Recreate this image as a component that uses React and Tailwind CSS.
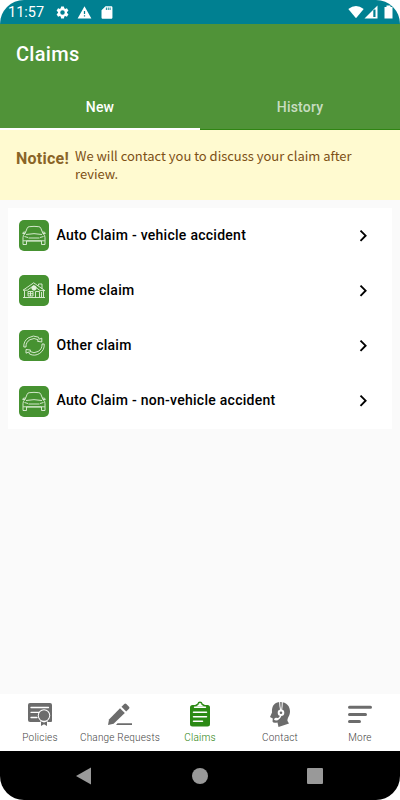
const claims = [
  { label: "Auto Claim - vehicle accident", Icon: CarIcon },
  { label: "Home claim", Icon: HouseIcon },
  { label: "Other claim", Icon: CycleIcon },
  { label: "Auto Claim - non-vehicle accident", Icon: CarIcon },
];

const navItems = [
  { label: "Policies", Icon: PoliciesIcon },
  { label: "Change Requests", Icon: PencilIcon },
  { label: "Claims", Icon: ClipboardIcon, active: true },
  { label: "Contact", Icon: HeadsetIcon },
  { label: "More", Icon: MoreIcon },
];

function CarIcon() {
  return (
    <svg viewBox="0 0 30 31" className="h-[31px] w-[30px]" fill="none" stroke="#e3f1dc" strokeWidth="0.9" strokeLinejoin="round">
      <path d="M6 13.5 8.2 8.2Q8.7 6.8 10.2 6.7Q15 6 19.8 6.7Q21.3 6.8 21.8 8.2L24 13.5" />
      <path d="M6 13.5H3.7Q3.6 11.8 6.3 12M24 13.5H26.3Q26.4 11.8 23.7 12" />
      <path d="M6 13.5Q4 15 4 17.5V24.5H7.5V21H22.5V24.5H26V17.5Q26 15 24 13.5" />
      <path d="M7 14.5Q15 12.8 23 14.5M4.2 20.8H25.8M9.5 18H20.5M5.5 16.5 9 17.5M24.5 16.5 21 17.5" />
    </svg>
  );
}

function HouseIcon() {
  return (
    <svg viewBox="0 0 30 31" className="h-[31px] w-[30px]" fill="none" stroke="#e3f1dc" strokeWidth="0.9">
      <path d="M4 22.5H26M5.5 22.5V15.5M24.5 22.5V15.5" />
      <path d="M4 15.2 14.7 7.8 25.8 15.6H21L14.7 10.7 8.3 15.2Z" />
      <path d="M19.5 10.5V9H23V14" />
      <circle cx="15" cy="13" r="2.2" fill="#e3f1dc" />
      <path d="M9 16.5H14V21H9ZM11.5 16.5V21M9 18.7H14M16.5 22.5V16.5H20.5V22.5M22.5 17V22" />
    </svg>
  );
}

function CycleIcon() {
  return (
    <svg viewBox="0 0 30 31" className="h-[31px] w-[30px]" fill="none" stroke="#e3f1dc" strokeWidth="0.9" strokeLinejoin="round">
      <path d="M4.8 17A10.2 10.2 0 0 1 19.5 7.2L20.2 9.2 22.8 8.2V12L18.5 11.3 19.2 9.8A8 8 0 0 0 7 17Z" />
      <path d="M25.2 14A10.2 10.2 0 0 1 10.5 24L9.8 22 7 23.2V19.5L11.5 20 10.8 21.4A8 8 0 0 0 23 14Z" />
    </svg>
  );
}

function PoliciesIcon() {
  return (
    <svg viewBox="0 0 26 26" className="size-[26px]">
      <path fill="currentColor" d="M3 2H23a2 2 0 0 1 2 2V20a1 1 0 0 1-1 1H3a2 2 0 0 1-2-2V4a2 2 0 0 1 2-2Z" />
      <path d="M4 6.5H21.500M4 11.3H12M4 16.5H10" stroke="white" strokeWidth="1.3" fill="none" strokeLinecap="round" />
      <path d="M13.500 19V24H20.500V19" fill="white" />
      <circle cx="17" cy="14.5" r="6.2" fill="white" />
      <circle cx="17" cy="14.5" r="5.2" fill="currentColor" />
      <path d="M14 20.500 17 21.500 20 20.500V25L17 23.200 14 25Z" fill="currentColor" />
    </svg>
  );
}

function PencilIcon() {
  return (
    <svg viewBox="0 0 26 26" className="size-[26px]" fill="currentColor">
      <path d="M1 24 2 18.6 13 7.3 17.8 12 6.6 22.8Z" />
      <path d="m14.5 5.800 2.800-2.800q1-1 2 0L22 5.700q1 1 0 2L19.200 10.500Z" />
      <path d="M10.5 22.2H25V24H9Z" />
    </svg>
  );
}

function ClipboardIcon() {
  return (
    <svg viewBox="0 0 26 26" className="size-[26px]">
      <path fill="currentColor" d="M5.500 4H8L10.300 2.800Q10.800.5 13 .5Q15.200.5 15.700 2.800L18 4H20.500Q23 4 23 6.500V23Q23 25.500 20.500 25.500H5.500Q3 25.500 3 23V6.500Q3 4 5.500 4Z" />
      <path d="M7.500 6.300H18.500" stroke="white" strokeWidth="1.4" strokeLinecap="round" />
      <path d="M9 5.500 11.500 3.700Q11.500 2 13 2Q14.500 2 14.500 3.700L17 5.500Z" fill="white" />
      <path d="M6.500 11.200H19.500M6.500 15.700H19.500M6.500 20.200H15.500" stroke="white" strokeWidth="1.5" strokeLinecap="round" />
    </svg>
  );
}

function HeadsetIcon() {
  return (
    <svg viewBox="0 0 26 26" className="size-[26px]">
      <path fill="currentColor" d="M13 1C20 1 23 5.500 23 10.500C23 15 20 17 20.500 20L22 22.500 11.500 26 10.500 21.500Q6 22.500 5.500 20.500L5.800 17.500 3 16 5 11.500C4.500 4.500 8 1 13 1Z" />
      <path d="M12.600.5Q12.600 5 13.700 9.500M15.300.5Q15.300 5 14.600 9.500" fill="none" stroke="white" strokeWidth="1" />
      <path d="M13.800 14.500Q12.500 18.200 9 18.200" fill="none" stroke="white" strokeWidth="1.5" />
      <circle cx="14" cy="11.700" r="2.3" stroke="white" strokeWidth="2" fill="currentColor" />
      <ellipse cx="9.300" cy="18.200" rx="2" ry="1.4" fill="white" />
    </svg>
  );
}

function MoreIcon() {
  return (
    <svg viewBox="0 0 26 26" className="size-[26px]" stroke="currentColor" strokeWidth="3" strokeLinecap="round">
      <path d="M2.5 6.300H23.500M2.500 13.400H18.500M2.500 20.500H12.500" />
    </svg>
  );
}

function StatusBar() {
  return (
    <div className="flex h-6 items-center justify-between bg-[#008091] text-white">
      <div className="flex items-center pl-2">
        <span className="w-[47px] pt-px text-[14.5px] leading-6">11:57</span>
        <svg viewBox="0 0 24 24" className="size-[15px]" fill="currentColor">
          <path d="M19.140 12.940a7 7 0 0 0 0-1.880l2.030-1.580a.5.5 0 0 0 .12-.61l-1.920-3.320a.5.5 0 0 0-.59-.22l-2.390.960a7 7 0 0 0-1.620-.940l-.360-2.540a.5.5 0 0 0-.480-.410h-3.840a.5.5 0 0 0-.470.410l-.360 2.540a7 7 0 0 0-1.620.940l-2.390-.960a.5.5 0 0 0-.590.220L2.740 8.870a.5.5 0 0 0 .12.610l2.030 1.580a7 7 0 0 0 0 1.880l-2.030 1.580a.5.5 0 0 0-.12.610l1.920 3.320c.12.220.370.290.590.220l2.390-.960c.5.380 1.030.7 1.620.940l.360 2.540c.05.240.240.410.480.410h3.840c.240 0 .440-.170.470-.410l.360-2.540a7 7 0 0 0 1.620-.940l2.390.960c.220.080.470 0 .590-.220l1.920-3.320a.5.5 0 0 0-.12-.610ZM12 15.600a3.600 3.600 0 1 1 0-7.200 3.600 3.600 0 0 1 0 7.200Z" />
        </svg>
        <svg viewBox="0 0 24 24" className="ml-[7px] size-[15px]" fill="currentColor">
          <path d="M1 21.500h22L12 2 1 21.500Zm12-3h-2v-2h2v2Zm0-4h-2v-5h2v5Z" />
        </svg>
        <svg viewBox="0 0 24 24" className="ml-[7px] size-[15px]" fill="currentColor">
          <path d="M19.500 2h-9L4 8.500V20c0 1.100.9 2 2 2H19.500c1.100 0 2-.9 2-2V4c0-1.100-.9-2-2-2Zm-7 6h-1.500V4h1.500v4Zm3 0H14V4h1.500v4Zm3 0H17V4h1.500v4Z" />
        </svg>
      </div>
      <div className="flex items-center pr-[7.5px]">
        <svg viewBox="0 0 16 14" className="h-[14px] w-4" fill="currentColor">
          <path d="M.3 4Q8-2 15.700 4L8 13.200Z" />
        </svg>
        <svg viewBox="0 0 14 14" className="h-[14px] w-[14px]">
          <path d="M.5 13.500 13.500.5V13.500Z" fill="white" />
          <path d="M9.300 5.500V12H11.500V4.500H10.300Z" fill="#008091" />
        </svg>
        <svg viewBox="0 0 9 14" className="ml-[6px] h-[14px] w-[9px]" fill="currentColor">
          <path d="M2.500.5h4V2H8.500V13.500H.5V2h2Z" />
        </svg>
      </div>
    </div>
  );
}

function Header() {
  return (
    <header className="flex h-[106px] flex-col bg-[#509338] text-white">
      <h1 className="h-[59px] pl-4 text-[20px] leading-[60px] font-medium tracking-[0.3px]">Claims</h1>
      <div className="grid h-[47px] grid-cols-2 text-center text-[14px] font-medium tracking-[0.2px]">
        <div className="h-[47px] border-b-2 border-white leading-[48px]">New</div>
        <div className="h-[47px] border-b border-[#2f8512] leading-[48px] text-white/70">History</div>
      </div>
    </header>
  );
}

function ClaimRow({ label, Icon }) {
  return (
    <li className="flex h-[55.2px] items-center pr-[24px] pl-[10.5px]">
      <div className="h-[31px] w-[30px] rounded-[5px] bg-[#469231]">
        <Icon />
      </div>
      <span className="ml-2 pb-px text-[14px] font-medium tracking-[0.27px] whitespace-nowrap text-black">{label}</span>
      <svg viewBox="0 0 9 14" className="ml-auto h-[14px] w-[9px]" fill="none" stroke="black" strokeWidth="1.9">
        <path d="m1.500 1.600 5.100 5.100-5.100 5.100" />
      </svg>
    </li>
  );
}

export default function App() {
  return (
    <div className="h-[800px] w-[400px] bg-white font-[Roboto,sans-serif]">
      <div className="flex h-full flex-col overflow-hidden rounded-[24px] bg-[#fafafa]">
        <StatusBar />
        <Header />
        <section className="flex h-[70px] bg-[#fffad0] pt-[17px] pl-4">
          <strong className="w-[59px] pt-px text-[16px] leading-[22px] font-bold tracking-[0.25px] text-[#8a6427]">Notice!</strong>
          <p className="w-[300px] font-['Noto_Sans_CJK_SC',sans-serif] text-[13px] leading-[18px] tracking-[-0.02px] text-[#7d5015]">
            We will contact you to discuss your claim after review.
          </p>
        </section>
        <main className="flex-1 p-2">
          <ul className="bg-white">
            {claims.map((claim) => (
              <ClaimRow key={claim.label} {...claim} />
            ))}
          </ul>
        </main>
        <nav className="grid h-[57px] grid-cols-5 bg-white">
          {navItems.map(({ label, Icon, active }) => (
            <div key={label} className={`flex flex-col items-center pt-[7px] ${active ? "text-[#2b8a14]" : "text-[#6c6c6c]"}`}>
              <Icon />
              <span className={`mt-1 text-[10px] leading-[14px] font-light tracking-[0.2px] whitespace-nowrap ${active ? "text-[#1f8008]" : "text-[#444]"}`}>
                {label}
              </span>
            </div>
          ))}
        </nav>
        <footer className="flex h-[49px] items-center bg-black pl-[76px] text-[#999]">
          <svg viewBox="0 0 16 18" className="h-[18px] w-4" fill="currentColor">
            <path d="M15 .5V17.500L0 9Z" />
          </svg>
          <div className="ml-[100px] size-4 rounded-full bg-[#999]" />
          <div className="ml-[99px] size-4 rounded-[1px] bg-[#999]" />
        </footer>
      </div>
    </div>
  );
}
